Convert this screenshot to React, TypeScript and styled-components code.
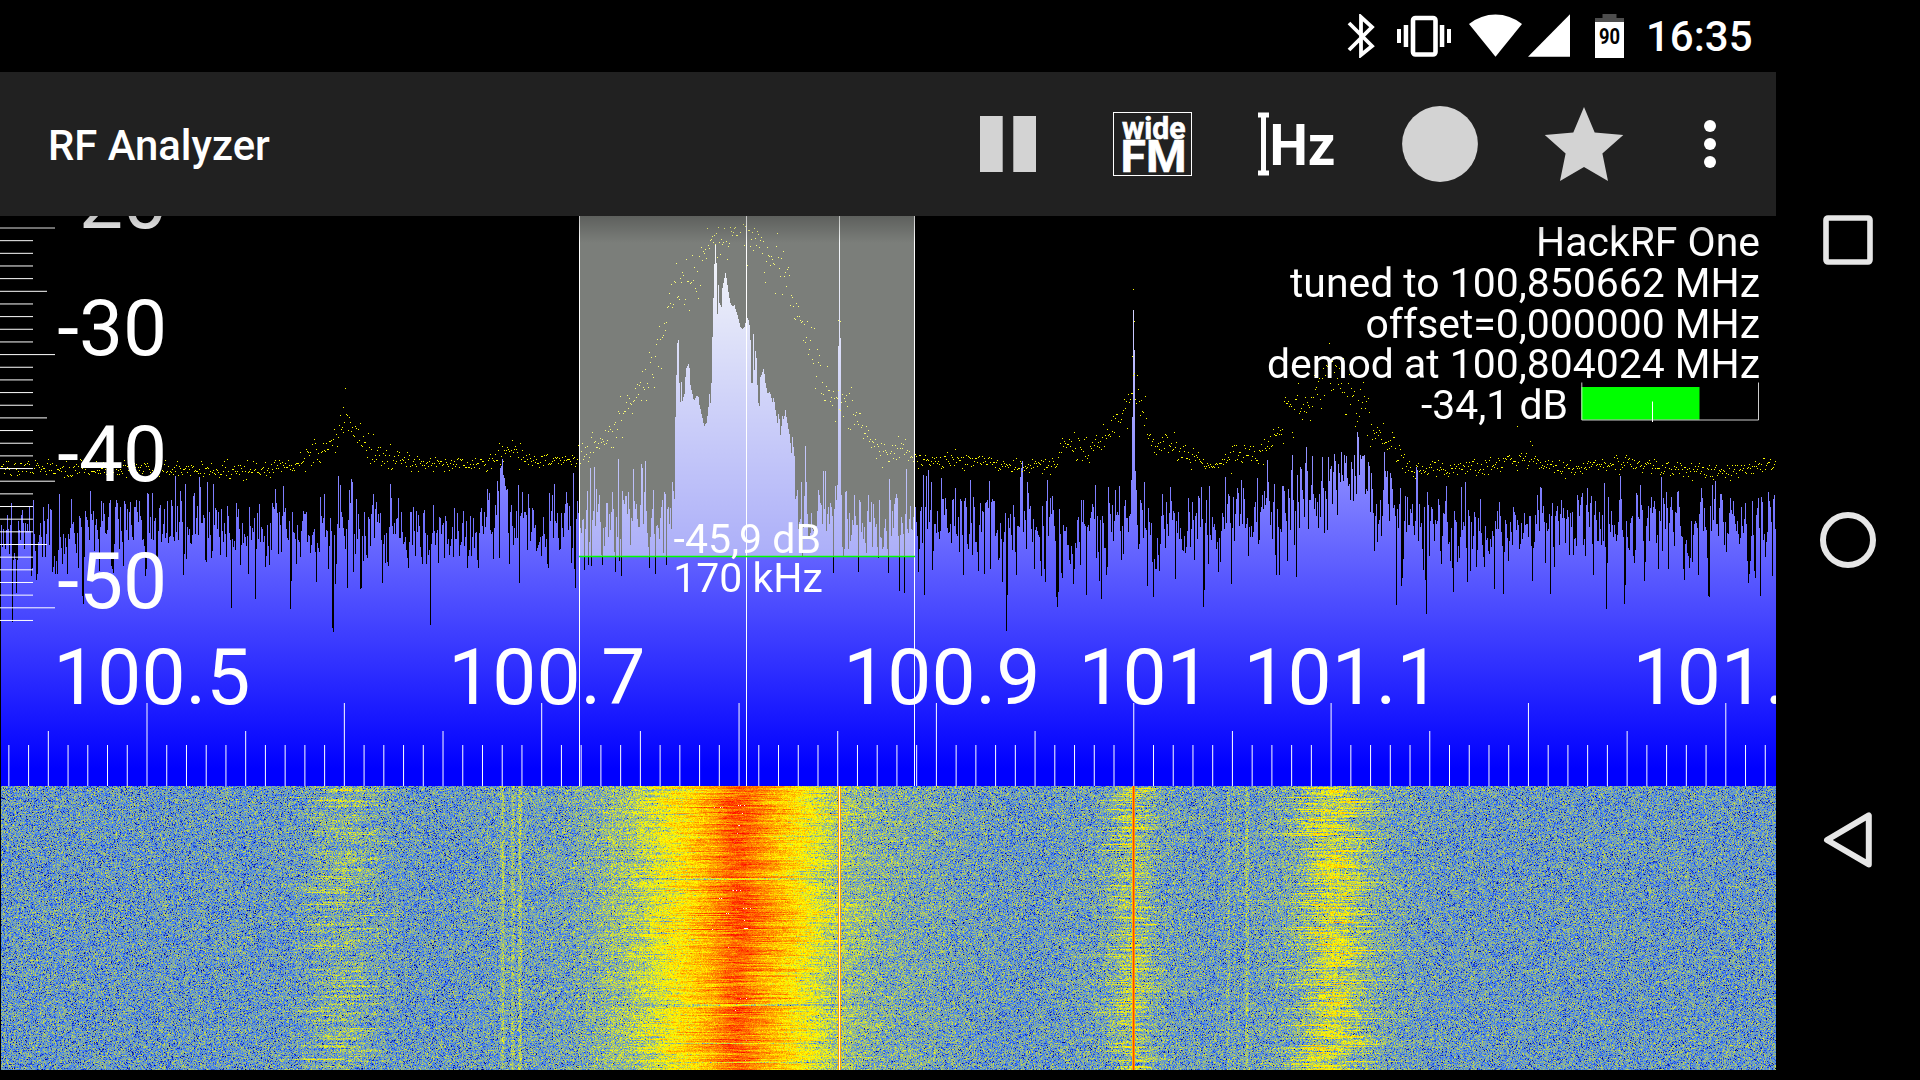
import React, { useLayoutEffect, useRef } from "react";
import styled, { createGlobalStyle } from "styled-components";

const GlobalStyle = createGlobalStyle`
  html, body { margin: 0; padding: 0; background: #000; overflow: hidden; }
  * { box-sizing: border-box; }
`;

const FONT = `Roboto, "Open Sans", sans-serif`;

const Screen = styled.div`
  display: flex;
  width: 1920px;
  height: 1080px;
  background: #000;
  color: #fff;
  font-family: ${FONT};
  overflow: hidden;
`;

const Main = styled.main`
  display: flex;
  flex-direction: column;
  width: 1776px;
  flex: none;
`;

const StatusBar = styled.header`
  display: flex;
  align-items: center;
  justify-content: flex-end;
  height: 72px;
  padding-right: 23px;
  flex: none;
`;

const StatusIcon = styled.svg<{ $gap: number }>`
  display: block;
  flex: none;
  margin-right: ${(p) => p.$gap}px;
`;

const Clock = styled.time`
  width: 107px;
  font-size: 42px;
  font-weight: 500;
  line-height: 72px;
  padding-top: 2px;
  white-space: nowrap;
`;

const AppBar = styled.div`
  display: flex;
  align-items: center;
  height: 144px;
  padding-left: 48px;
  background: #212121;
  flex: none;
`;

const Title = styled.h1`
  margin: 0;
  flex: 1;
  font-size: 41.8px;
  font-weight: 500;
  line-height: 50px;
  padding-top: 3px;
  white-space: nowrap;
`;

const Action = styled.button<{ $menu?: boolean }>`
  display: flex;
  align-items: center;
  justify-content: center;
  width: ${(p) => (p.$menu ? 120 : 144)}px;
  height: 144px;
  padding: ${(p) => (p.$menu ? "0 12px 0 0" : "0")};
  border: 0;
  background: none;
  color: #d3d3d3;
`;

const Spectrum = styled.section`
  display: grid;
  height: 570px;
  flex: none;
  overflow: hidden;
  & > * {
    grid-area: 1 / 1;
  }
`;

const Plot = styled.canvas`
  display: block;
`;

const Overlay = styled.svg`
  display: block;
  font-family: ${FONT};
  fill: #fff;
`;

const Info = styled.div`
  display: flex;
  flex-direction: column;
  align-items: flex-end;
  justify-self: end;
  padding: 6px 16px 0 0;
  font-size: 40.9px;
  line-height: 40.8px;
  white-space: nowrap;
`;

const InfoLine = styled.div`
  display: flex;
  align-items: flex-start;
  height: 40.8px;
`;

const Meter = styled.svg`
  margin: -3px 1px 0 13px;
  flex: none;
`;

const Shade = styled.div`
  height: 27px;
  background: linear-gradient(rgba(0, 0, 0, 0.24), rgba(0, 0, 0, 0));
`;

const NavBar = styled.nav`
  display: flex;
  flex-direction: column;
  justify-content: center;
  width: 144px;
`;

const NavButton = styled.button`
  display: flex;
  align-items: center;
  justify-content: center;
  height: 300px;
  padding: 0;
  border: 0;
  background: none;
`;

type Point = [number, number];

const WIDTH = 1776;
const SPECTRUM_TOP = 216;
const SPECTRUM_HEIGHT = 570;
const WATERFALL_HEIGHT = 284;

function createRandom(seed: number) {
  let a = seed;
  return () => {
    a = (a + 0x6d2b79f5) | 0;
    let t = Math.imul(a ^ (a >>> 15), 1 | a);
    t = (t + Math.imul(t ^ (t >>> 7), 61 | t)) ^ t;
    return ((t ^ (t >>> 14)) >>> 0) / 4294967296;
  };
}

function interpolate(points: Point[], x: number) {
  if (x <= points[0][0]) return points[0][1];
  for (let i = 1; i < points.length; i++) {
    const [x1, y1] = points[i];
    if (x <= x1) {
      const [x0, y0] = points[i - 1];
      return y0 + ((y1 - y0) * (x - x0)) / (x1 - x0 || 1);
    }
  }
  return points[points.length - 1][1];
}

/* Station outline, in thirds of a pixel from (560, 210). */
const station: Point[] = ([
  [339, 866], [342, 866], [345, 620], [348, 495], [351, 400], [355, 388], [357, 520], [360, 575], [363, 515],
  [366, 572], [372, 552], [375, 500], [378, 475], [384, 462], [387, 475], [390, 525], [396, 552], [400, 572],
  [408, 558], [414, 560], [417, 585], [426, 625], [431, 648], [438, 640], [443, 605], [447, 552], [450, 580],
  [453, 520], [456, 380], [459, 265], [462, 162], [465, 105], [468, 160], [471, 312], [474, 225], [477, 280],
  [483, 292], [486, 235], [489, 220], [495, 190], [498, 205], [504, 245], [510, 280], [515, 290], [522, 286],
  [530, 312], [540, 350], [546, 358], [552, 350], [557, 333], [562, 320], [567, 345], [570, 390], [573, 520],
  [577, 518], [579, 372], [582, 480], [585, 424], [588, 445], [591, 525], [594, 580], [597, 587], [600, 502],
  [606, 486], [610, 474], [615, 520], [621, 550], [628, 546], [636, 575], [640, 562], [645, 600], [651, 638],
  [654, 612], [657, 628], [660, 675], [666, 618], [670, 630], [675, 600], [681, 640], [687, 672], [693, 728],
  [696, 682], [702, 738], [705, 868],
] as Point[]).map(([x, y]) => [560 + x / 3, 210 + y / 3]);

/* Column heights that stand out of the noise floor. */
const markers: Point[] = [
  [12, 622], [13, 560], [33, 500], [59, 494], [83, 604], [82, 596], [148, 494], [152, 493], [110, 500],
  [175, 476], [185, 484], [199, 477], [200, 487], [207, 482], [213, 484], [231, 608], [255, 599], [275, 489],
  [283, 486], [290, 609], [320, 497], [324, 494], [332, 628], [333, 632], [338, 476], [340, 485], [347, 588],
  [351, 479], [352, 482], [361, 588], [373, 494], [390, 484], [430, 625],
  [500, 468], [501, 466], [502, 459], [503, 475], [504, 478], [506, 490], [518, 485], [573, 473], [554, 484],
  [584, 570], [588, 565], [590, 468], [594, 467], [602, 565], [618, 459], [633, 469], [641, 464], [642, 468],
  [645, 461], [649, 568], [666, 565], [805, 446], [806, 482], [801, 482], [823, 471], [825, 471], [833, 573],
  [858, 572], [904, 593], [906, 469], [889, 479],
  [923, 475], [926, 476], [928, 470], [931, 482], [941, 478], [970, 480], [984, 574], [989, 481], [1006, 631],
  [1007, 595], [1020, 477], [1021, 468], [1022, 461], [1027, 482], [1034, 569], [1045, 582], [1047, 480],
  [1056, 597], [1057, 607], [1058, 592], [1062, 578], [1086, 595], [1095, 485], [1101, 599], [1108, 487],
  [1119, 486], [1144, 482], [1147, 586], [1153, 597], [1170, 487], [1175, 579], [1201, 487], [1203, 607],
  [1204, 590], [1209, 486], [1225, 477], [1241, 480], [1257, 478], [1267, 460], [1268, 482], [1274, 484],
  [1287, 561], [1291, 470], [1292, 455], [1296, 577], [1305, 463], [1306, 447], [1307, 471], [1328, 457],
  [1338, 464], [1341, 452], [1344, 455], [1345, 463], [1351, 462], [1354, 455], [1356, 494], [1357, 432], [1358, 437],
  [1359, 475], [1360, 455], [1361, 459], [1369, 466], [1384, 452], [1385, 471], [1396, 605], [1400, 488],
  [1405, 496], [1416, 467], [1417, 470], [1425, 580], [1426, 614], [1446, 486], [1461, 487], [1465, 482],
  [1540, 487], [1550, 594], [1587, 488], [1604, 483], [1620, 476], [1624, 604], [1625, 585], [1640, 485],
  [1644, 581], [1661, 477], [1684, 580], [1698, 575], [1712, 485], [1715, 481], [1721, 494], [1758, 498],
  [1760, 596], [1772, 576], [1774, 495],
  [837, 485], [838, 346], [839, 216], [840, 338], [841, 495],
  [1130, 514], [1131, 480], [1132, 417], [1133, 310], [1134, 350], [1135, 471], [1136, 490],
];

const floorLevel: Point[] = [
  [0, 532], [160, 528], [480, 530], [500, 505], [530, 520], [800, 520], [1100, 530], [1200, 525], [1260, 515],
  [1300, 495], [1330, 480], [1365, 480], [1385, 500], [1400, 525], [1776, 527],
];

const holdLevel: Point[] = [
  [1, 467], [60, 468], [250, 470], [290, 465], [310, 455], [330, 449], [335, 435], [344, 415], [352, 430],
  [365, 445], [380, 455], [400, 460], [450, 465], [490, 462], [505, 450], [518, 451], [530, 462], [570, 459],
  [583, 455], [600, 443], [615, 425], [630, 405], [640, 382], [650, 370], [662, 340], [668, 310], [675, 290],
  [690, 280], [705, 255], [715, 243], [730, 232], [742, 222], [752, 240], [760, 248], [775, 262], [785, 275],
  [800, 320], [812, 355], [825, 385], [836, 410], [850, 408], [860, 427], [875, 445], [885, 453], [900, 450],
  [915, 459], [940, 461], [960, 457], [1000, 465], [1055, 465], [1066, 442], [1085, 450], [1105, 442],
  [1120, 420], [1127, 400], [1131, 388], [1137, 390], [1145, 418], [1155, 448], [1165, 442], [1190, 455],
  [1210, 465], [1225, 460], [1245, 453], [1258, 460], [1270, 442], [1282, 432], [1286, 408], [1300, 412],
  [1312, 395], [1325, 375], [1335, 372], [1350, 395], [1368, 410], [1372, 430], [1390, 442], [1400, 455],
  [1410, 469], [1480, 468], [1525, 455], [1560, 468], [1630, 463], [1690, 470], [1720, 473], [1765, 465], [1776, 467],
];

function drawSpectrum(ctx: CanvasRenderingContext2D) {
  const random = createRandom(1008);
  const fill = ctx.createLinearGradient(0, 0, 0, SPECTRUM_HEIGHT);
  fill.addColorStop(0, "#ffffff");
  fill.addColorStop(0.97, "#0000ff");
  fill.addColorStop(1, "#0000ff");
  ctx.fillStyle = "#000";
  ctx.fillRect(0, 0, WIDTH, SPECTRUM_HEIGHT);
  ctx.fillStyle = fill;

  const special = new Map(markers);
  let previous = 1;
  for (let x = 1; x < WIDTH; x++) {
    let power = 0;
    for (let k = 0; k < 3; k++) power -= Math.log(1 - random() * 0.995);
    power /= 3;
    const mixed = power * 0.72 + previous * 0.28;
    previous = power;
    let y = interpolate(floorLevel, x) - 12.66 * 10 * Math.log10(mixed) * 0.92 - 2;
    y = Math.max(y, interpolate(floorLevel, x) - 42 + random() * 18);
    if (x >= 674 && x <= 795) y = interpolate(station, x);
    const marked = special.get(x);
    if (marked !== undefined) y = marked;
    y = Math.round(y) - SPECTRUM_TOP;
    ctx.fillRect(x, y, 1, SPECTRUM_HEIGHT - y);
  }

  ctx.fillStyle = "#ffff00";
  for (let x = 1; x < WIDTH; x++) {
    const level = interpolate(holdLevel, x);
    const spread = level > 458 ? 8 : level > 430 ? 14 : 25;
    const jitter = (random() + random() + random() - 1.5) * spread;
    ctx.fillRect(x, Math.round(level + jitter) - SPECTRUM_TOP, 1, 1);
  }
  ([[1133, 289], [1134, 321], [1132, 356], [838, 320], [840, 321], [343, 407], [1517, 426]] as Point[]).forEach(
    ([x, y]) => ctx.fillRect(x, y - SPECTRUM_TOP, 1, 1),
  );
}

/* Maps a level of 0..255 to black, blue, yellow, red and white. */
function heat(level: number): [number, number, number] {
  const i = Math.max(0, Math.min(255, level));
  if (i < 20) return [0, 0, 0];
  if (i < 70) return [0, 0, (140 * (i - 20)) / 50];
  if (i < 100) return [(60 * (i - 70)) / 30, (125 * (i - 70)) / 30, (115 * (i - 70)) / 30 + 140];
  if (i < 150) return [(195 * (i - 100)) / 50 + 60, (130 * (i - 100)) / 50 + 125, 255 - (255 * (i - 100)) / 50];
  if (i < 250) return [255, 255 - (255 * (i - 150)) / 100, 0];
  return [255, (255 * (i - 250)) / 5, (255 * (i - 250)) / 5];
}

const broadcast: Point[] = [
  [440, 0], [560, 3], [600, 9], [612, 14], [625, 15], [640, 21], [655, 29], [670, 40], [690, 55], [710, 72], [725, 92],
  [737, 111], [748, 98], [762, 80], [780, 63], [800, 46], [815, 33], [830, 22], [850, 13], [880, 8], [950, 3], [1020, 0],
];

const narrowLines: Point[] = [
  [500, 5], [501, 7], [502, 15], [503, 14], [504, 5], [511, 8], [512, 11], [513, 11], [514, 6], [518, 9], [519, 16],
  [520, 16], [521, 8], [1227, 7], [1228, 10], [1229, 8], [1234, 6], [1238, 6], [1245, 7], [1246, 13], [1247, 11],
  [1248, 6], [612, 6], [613, 5],
];

function drawWaterfall(ctx: CanvasRenderingContext2D) {
  const random = createRandom(20);
  const image = ctx.createImageData(WIDTH, WATERFALL_HEIGHT);
  const lines = new Map(narrowLines);
  const gauss = () => random() + random() + random() + random() - 2;

  const profile: number[][] = [];
  for (let x = 0; x < WIDTH; x++) {
    const bump = (center: number, width: number, height: number) =>
      height * Math.exp(-(((x - center) / width) ** 2));
    profile.push([
      interpolate(broadcast, x),
      bump(342, 30, 12),
      bump(1133, 17, 17) + bump(1133, 70, 4),
      bump(1332, 19, 25) + bump(1332, 58, 11),
    ]);
  }

  for (let row = 0; row < WATERFALL_HEIGHT; row++) {
    const quiet = [92, 93, 218, 219, 257, 276].includes(row);
    const swell = Math.sin(row / 17) * 0.05 + Math.sin(row / 41 - 1) * 0.04;
    const gains = [
      quiet ? 0.35 : 1 + swell + gauss() * 0.11,
      0.85 + gauss() * 0.9,
      0.9 + gauss() * 0.8,
      0.97 + gauss() * 0.5,
    ];
    const shifts = [gauss() * 12, gauss() * 24, gauss() * 14, gauss() * 22];
    let streak = 0;
    for (let x = 0; x < WIDTH; x++) {
      streak = streak * 0.94 + gauss() * 0.33;
      let signal = 0;
      for (let s = 0; s < 4; s++) {
        const at = Math.max(0, Math.min(WIDTH - 1, Math.round(x + shifts[s])));
        signal += profile[at][s] * gains[s];
      }
      const center = profile[x][0];
      let level = 112 + signal + streak * Math.min(17, signal * 0.5);
      const scatter = 22 - Math.min(9, center * 0.1);
      const noise = gauss();
      level += noise * scatter * (noise < 0 ? 1.2 : 0.95);
      if (random() < 0.025 && signal < 40) level -= 18 + random() * 20;
      level += lines.get(x) ?? 0;
      if (x === 838 || x === 840) level = 188 + gauss() * 4;
      if (x === 839) level = 255;
      if (x === 1132) level = 181;
      if (x === 1133) level = 224;
      if (x === 1134) level = 191;
      const [r, g, b] = x === 0 ? [0, 0, 0] : heat(level);
      const offset = (row * WIDTH + x) * 4;
      image.data[offset] = r;
      image.data[offset + 1] = g;
      image.data[offset + 2] = b;
      image.data[offset + 3] = 255;
    }
  }
  ctx.putImageData(image, 0, 0);
}

function CanvasPlot({ height, draw }: { height: number; draw: (ctx: CanvasRenderingContext2D) => void }) {
  const ref = useRef<HTMLCanvasElement>(null);
  useLayoutEffect(() => {
    const ctx = ref.current?.getContext("2d");
    if (ctx) draw(ctx);
  }, [draw]);
  return <Plot ref={ref} width={WIDTH} height={height} />;
}

const powerTicks = Array.from({ length: 32 }, (_, i) => ({
  y: 12 + i * 12.66,
  length: i % 10 === 0 ? 55 : i % 5 === 0 ? 47 : 33,
}));

const powerLabels = ["-20", "-30", "-40", "-50"];

const frequencyTicks = Array.from({ length: 90 }, (_, i) => {
  const step = i - 7;
  return {
    x: 147 + step * 19.735,
    top: step % 10 === 0 ? 487 : step % 5 === 0 ? 515 : 529,
  };
});

const frequencyLabels = [
  { x: 53.2, text: "100.5" },
  { x: 448.2, text: "100.7" },
  { x: 843.2, text: "100.9" },
  { x: 1078.4, text: "101" },
  { x: 1243.4, text: "101.1" },
  { x: 1632.6, text: "101.3" },
];

function Scales() {
  return (
    <Overlay width={WIDTH} height={SPECTRUM_HEIGHT} viewBox={`0 0 ${WIDTH} ${SPECTRUM_HEIGHT}`}>
      <rect x="579.5" y="0" width="334.5" height="340" fill="rgb(246,251,243)" fillOpacity="0.5" />
      <g stroke="#fff" strokeWidth="1">
        {powerTicks.map((t) => (
          <line key={t.y} x1="0" x2={t.length} y1={t.y} y2={t.y} />
        ))}
        {frequencyTicks.map((t) => (
          <line key={t.x} x1={t.x} x2={t.x} y1={t.top} y2="570" />
        ))}
        <line x1="579.5" x2="579.5" y1="0" y2="570" />
        <line x1="746.5" x2="746.5" y1="0" y2="570" />
        <line x1="914.5" x2="914.5" y1="0" y2="570" />
      </g>
      <line x1="579" x2="915" y1="340.5" y2="340.5" stroke="#0f0" strokeWidth="1.3" />
      <g fontSize="78.5">
        {powerLabels.map((label, i) => (
          <text key={label} x="57.2" y={12 + i * 126.6}>
            {label}
          </text>
        ))}
        {frequencyLabels.map((label) => (
          <text key={label.text} x={label.x} y="488">
            {label.text}
          </text>
        ))}
      </g>
      <g fontSize="41">
        <text x="673.6" y="337">-45,9 dB</text>
        <text x="673.2" y="376">170 kHz</text>
      </g>
    </Overlay>
  );
}

function StatusIcons() {
  return (
    <>
      <StatusIcon $gap={22} width="28" height="44" viewBox="0 0 28 44">
        <path d="M2 9 25 32 14 41V3L25 13 2 36" fill="none" stroke="#fff" strokeWidth="3.8" strokeLinejoin="miter" />
      </StatusIcon>
      <StatusIcon $gap={18} width="54" height="42" viewBox="0 0 54 42" fill="#fff">
        <path d="M0 14h4v14H0zM6.7 10h4.5v22H6.7zM42.8 10h4.5v22h-4.5zM50 14h4v14h-4z" />
        <rect x="16" y="3" width="22.5" height="36.5" rx="2.5" fill="none" stroke="#fff" strokeWidth="4.6" />
      </StatusIcon>
      <StatusIcon $gap={6} width="53" height="44" viewBox="0 0 53 44" fill="#fff">
        <path d="M0 10Q12 0.5 26.5 0.5T53 10L26.5 42.7z" />
      </StatusIcon>
      <StatusIcon $gap={25} width="42" height="44" viewBox="0 0 42 44" fill="#fff">
        <path d="M42 0.3v42.4H0z" />
      </StatusIcon>
      <StatusIcon $gap={22} width="29" height="44" viewBox="0 0 29 44">
        <path d="M7.5 0h14v4H29v5H0V4h7.5z" fill="#4d4d4d" />
        <path d="M0 8h29v36H0z" fill="#fff" />
        <text x="14.5" y="30" textAnchor="middle" fontSize="22" fontWeight="700" textLength="21" lengthAdjust="spacingAndGlyphs" fill="#000" fontFamily="Roboto">
          90
        </text>
      </StatusIcon>
    </>
  );
}

function Toolbar() {
  return (
    <AppBar>
      <Title>RF Analyzer</Title>
      <Action aria-label="Pause">
        <svg width="56" height="56" fill="currentColor">
          <path d="M0 0h22.7v56H0zM33.3 0H56v56H33.3z" />
        </svg>
      </Action>
      <Action aria-label="Demodulation">
        <svg width="80" height="64" fill="#fff" fontFamily="Roboto" fontWeight="700">
          <rect x="1.5" y="0.5" width="78" height="63" fill="none" stroke="#fff" />
          <text x="10" y="27" fontSize="31" stroke="#fff" strokeWidth="0.6" textLength="63.5" lengthAdjust="spacingAndGlyphs">wide</text>
          <text x="8.5" y="59.7" fontSize="44.5" stroke="#fff" strokeWidth="0.5" textLength="66" lengthAdjust="spacingAndGlyphs">FM</text>
        </svg>
      </Action>
      <Action aria-label="Frequency">
        <svg width="78" height="64" fill="#fff" fontFamily="Roboto" fontWeight="700">
          <path d="M1 0.5h11v5H9v53h3v5H1v-5h3v-53H1z" />
          <text x="12.5" y="53" fontSize="57.5" textLength="66" lengthAdjust="spacingAndGlyphs">Hz</text>
        </svg>
      </Action>
      <Action aria-label="Record">
        <svg width="76" height="76" fill="currentColor">
          <circle cx="38" cy="38" r="37.9" />
        </svg>
      </Action>
      <Action aria-label="Bookmarks">
        <svg width="80" height="76" fill="currentColor">
          <path d="M40 1 50.7 26.5 79.3 29 58.4 47.5 64 75 40 61 16 75 21.6 47.5 0.8 29 29.3 26.5z" />
        </svg>
      </Action>
      <Action aria-label="More" $menu>
        <svg width="12" height="48" fill="#fff">
          <circle cx="6" cy="6" r="6" />
          <circle cx="6" cy="24" r="6" />
          <circle cx="6" cy="42" r="6" />
        </svg>
      </Action>
    </AppBar>
  );
}

export default function App() {
  return (
    <>
      <GlobalStyle />
      <Screen>
        <Main>
          <StatusBar>
            <StatusIcons />
            <Clock>16:35</Clock>
          </StatusBar>
          <Toolbar />
          <Spectrum>
            <CanvasPlot height={SPECTRUM_HEIGHT} draw={drawSpectrum} />
            <Scales />
            <Info>
              <InfoLine>HackRF One</InfoLine>
              <InfoLine>tuned to 100,850662 MHz</InfoLine>
              <InfoLine>offset=0,000000 MHz</InfoLine>
              <InfoLine>demod at 100,804024 MHz</InfoLine>
              <InfoLine>
                -34,1 dB
                <Meter width="178" height="40">
                  <rect x="0.5" y="5" width="118" height="32.7" fill="#0f0" />
                  <path d="M0.8 0.5V38H177.5V0.5" fill="none" stroke="#fff" strokeOpacity="0.8" />
                  <path d="M71.5 19.5V40" stroke="#fff" />
                </Meter>
              </InfoLine>
            </Info>
            <Shade />
          </Spectrum>
          <CanvasPlot height={WATERFALL_HEIGHT} draw={drawWaterfall} />
        </Main>
        <NavBar>
          <NavButton aria-label="Recent apps">
            <svg width="50" height="50" fill="none" stroke="#e6e6e6" strokeWidth="5.6">
              <rect x="3" y="3" width="44" height="44" rx="2" />
            </svg>
          </NavButton>
          <NavButton aria-label="Home">
            <svg width="56" height="56" fill="none" stroke="#e6e6e6" strokeWidth="6">
              <circle cx="28" cy="28" r="25" />
            </svg>
          </NavButton>
          <NavButton aria-label="Back">
            <svg width="50" height="56" fill="none" stroke="#e6e6e6" strokeWidth="6" strokeLinejoin="round">
              <path d="M45.8 3.4V52.4L4 28z" />
            </svg>
          </NavButton>
        </NavBar>
      </Screen>
    </>
  );
}
